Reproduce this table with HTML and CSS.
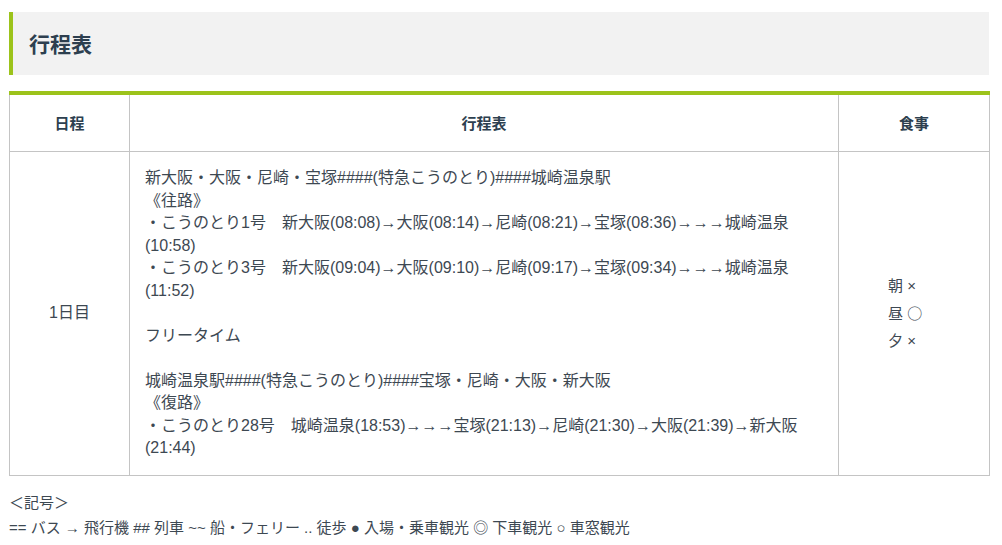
FILE: index.html
```html
<!DOCTYPE html>
<html lang="ja">
<head>
<meta charset="utf-8">
<title>行程表</title>
<link rel="stylesheet" href="styles.css">
</head>
<body>
<div class="wrap">
  <h2 class="heading">行程表</h2>
  <table class="sched">
    <colgroup>
      <col class="c-day">
      <col class="c-plan">
      <col class="c-meal">
    </colgroup>
    <thead>
      <tr><th>日程</th><th>行程表</th><th>食事</th></tr>
    </thead>
    <tbody>
      <tr>
        <td class="day">1日目</td>
        <td class="plan">新大阪・大阪・尼崎・宝塚####(特急こうのとり)####城崎温泉駅<br>《往路》<br>・こうのとり1号　新大阪(08:08)→大阪(08:14)→尼崎(08:21)→宝塚(08:36)→→→城崎温泉(10:58)<br>・こうのとり3号　新大阪(09:04)→大阪(09:10)→尼崎(09:17)→宝塚(09:34)→→→城崎温泉(11:52)<br><br>フリータイム<br><br>城崎温泉駅####(特急こうのとり)####宝塚・尼崎・大阪・新大阪<br>《復路》<br>・こうのとり28号　城崎温泉(18:53)→→→宝塚(21:13)→尼崎(21:30)→大阪(21:39)→新大阪(21:44)</td>
        <td class="meal"><div class="meals">朝 ×<br>昼 <span class="mark">○</span><br>夕 ×</div></td>
      </tr>
    </tbody>
  </table>
  <div class="legend">
    <p>＜記号＞</p>
    <p>== バス → 飛行機 ## 列車 ~~ 船・フェリー .. 徒歩 ● 入場・乗車観光 ◎ 下車観光 ○ 車窓観光</p>
  </div>
</div>
</body>
</html>
```
FILE: styles.css
```css
html, body {
  margin: 0;
  padding: 0;
  background: #fff;
}
body {
  font-family: "Liberation Sans", Arial, "Noto Sans CJK JP", sans-serif;
  color: #3d4852;
  font-size: 16px;
  line-height: 1.4;
}
.wrap {
  width: 980px;
  margin-left: 9px;
  padding-top: 12px;
}
.heading {
  margin: 0;
  background: #f2f2f2;
  border-left: 4px solid #9cc31b;
  height: 63px;
  box-sizing: border-box;
  padding-left: 16px;
  display: flex;
  align-items: center;
  font-size: 21px;
  font-weight: bold;
  color: #2d3f4f;
  font-family: "Noto Sans CJK JP", sans-serif;
}
.sched {
  margin-top: 16px;
  width: 980px;
  border-collapse: collapse;
  border-top: 4px solid #9cc31b;
  table-layout: fixed;
}
.c-day { width: 120px; }
.c-plan { width: 709px; }
.c-meal { width: 151px; }
.sched th, .sched td {
  border: 1px solid #c4c4c4;
}
.sched thead tr th {
  border-top: 4px solid #9cc31b;
}
.sched th {
  font-weight: bold;
  font-size: 15px;
  color: #2d3f4f;
  height: 56px;
  padding: 0;
  text-align: center;
  vertical-align: middle;
}
.sched td {
  vertical-align: middle;
}
.day {
  text-align: center;
  padding: 0;
}
.plan {
  padding: 15px 15px;
  text-align: left;
  line-height: 22.5px;
}
.meal {
  padding: 0 0 0 49px;
}
.meals {
  line-height: 27px;
  font-size: 15px;
}
.mark {
  font-family: "Noto Sans CJK JP", sans-serif;
}
.legend {
  margin-top: 14px;
  font-size: 15px;
  line-height: 25px;
}
.legend p {
  margin: 0;
}
```
